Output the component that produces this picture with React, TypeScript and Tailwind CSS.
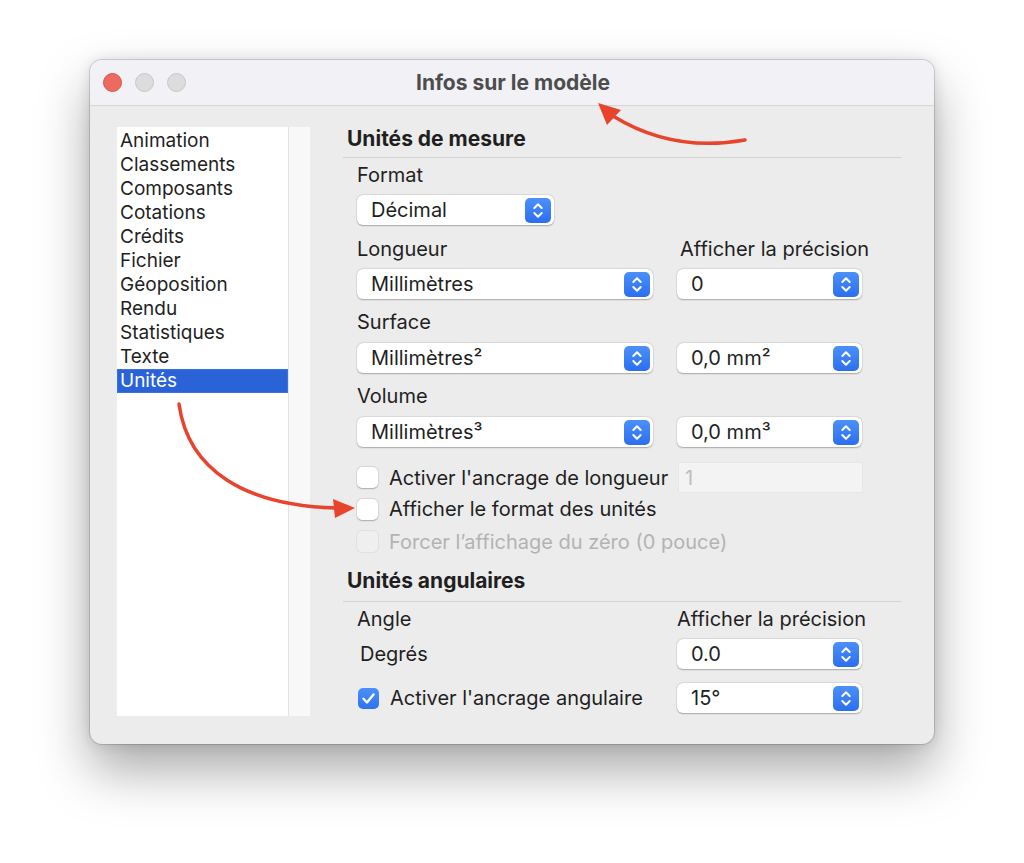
import React from 'react';

const font = { fontFamily: 'Inter, "Open Sans", sans-serif' };

const sections = [
  'Animation',
  'Classements',
  'Composants',
  'Cotations',
  'Crédits',
  'Fichier',
  'Géoposition',
  'Rendu',
  'Statistiques',
  'Texte',
  'Unités',
];

function Stepper() {
  return (
    <div className="w-[26px] h-[25px] rounded-[5px] bg-gradient-to-b from-[#4b90f9] to-[#2c6ef0] flex items-center justify-center shrink-0">
      <svg width="26" height="25" viewBox="0 0 26 25" fill="none">
        <path d="M9.3 10 L13 6.3 L16.7 10" stroke="white" strokeWidth="2" strokeLinecap="round" strokeLinejoin="round" />
        <path d="M9.3 15 L13 18.7 L16.7 15" stroke="white" strokeWidth="2" strokeLinecap="round" strokeLinejoin="round" />
      </svg>
    </div>
  );
}

function Select({ value, className = '' }: { value: string; className?: string }) {
  return (
    <div
      className={`h-[30px] bg-white rounded-[6px] flex items-center pl-[14px] pr-[3px] shadow-[0_0.5px_1.5px_rgba(0,0,0,0.28),0_0_0_0.5px_rgba(0,0,0,0.06)] ${className}`}
    >
      <span className="flex-1 text-[20px] text-[#1f1f1f] leading-none whitespace-nowrap">{value}</span>
      <Stepper />
    </div>
  );
}

function Checkbox({ checked, disabled }: { checked?: boolean; disabled?: boolean }) {
  if (checked) {
    return (
      <div className="w-[21px] h-[21px] rounded-[5px] bg-gradient-to-b from-[#4b90f9] to-[#2f72f0] flex items-center justify-center shrink-0">
        <svg width="21" height="21" viewBox="0 0 21 21" fill="none">
          <path d="M5.5 10.8 L9 14.5 L15.5 6.5" stroke="white" strokeWidth="2.4" strokeLinecap="round" strokeLinejoin="round" />
        </svg>
      </div>
    );
  }
  return (
    <div
      className={`w-[21px] h-[21px] rounded-[5px] shrink-0 ${
        disabled
          ? 'bg-[#efefef] shadow-[0_0_0_1px_rgba(0,0,0,0.05)]'
          : 'bg-white shadow-[0_0.5px_1.5px_rgba(0,0,0,0.25),0_0_0_0.5px_rgba(0,0,0,0.08)]'
      }`}
    />
  );
}

function Label({ children, className = '' }: { children: React.ReactNode; className?: string }) {
  return (
    <div className={`h-6 flex items-center text-[20px] text-[#1f1f1f] whitespace-nowrap ${className}`}>{children}</div>
  );
}

export default function App() {
  return (
    <div className="relative w-[1024px] h-[863px] bg-white pt-[60px] pl-[90px]" style={font}>
      <div className="w-[844px] h-[684px] rounded-[12px] bg-[#ececec] flex flex-col overflow-hidden shadow-[0_26px_52px_rgba(0,0,0,0.34),0_0_14px_rgba(0,0,0,0.12),0_0_0_1px_rgba(0,0,0,0.14)]">
        {/* title bar */}
        <div className="relative h-[46px] shrink-0 bg-[#f2f1f6] border-b border-[#d6d6d6] flex items-center">
          <div className="flex items-center gap-[13px] pl-[13px]">
            <div className="w-[19px] h-[19px] rounded-full bg-[#ed6a5e] border border-[#d8564a]" />
            <div className="w-[19px] h-[19px] rounded-full bg-[#dcdcdc] border border-[#c8c8c8]" />
            <div className="w-[19px] h-[19px] rounded-full bg-[#dcdcdc] border border-[#c8c8c8]" />
          </div>
          <div className="absolute inset-0 flex items-center justify-center pt-[1px] pl-[2px] text-[21px] font-bold text-[#4d4d4d]">
            Infos sur le modèle
          </div>
        </div>

        {/* body */}
        <div className="flex flex-1 pl-[27px] pt-[21px] pb-[28px] pr-[32px]">
          <div className="flex w-[193px] shrink-0">
            <div className="w-[171px] bg-white pt-[2px]">
              {sections.map((s) => (
                <div
                  key={s}
                  className={`h-6 flex items-center pl-[3px] text-[19px] ${
                    s === 'Unités' ? 'bg-[#2a63d8] text-white shadow-[inset_0_0_0_1px_#3a72e0]' : 'text-[#1f1f1f]'
                  }`}
                >
                  {s}
                </div>
              ))}
            </div>
            <div className="w-[22px] bg-[#f8f8f8] border-l border-[#e3e3e3]" />
          </div>

          <div className="flex-1 ml-[33px] flex flex-col">
            <div className="h-6 flex items-center pl-[4px] text-[21px] font-bold text-[#1f1f1f]">Unités de mesure</div>
            <div className="mt-[6px] border-t border-[#d3d3d3]" />

            <div className="pl-[14px] flex flex-col">
              <Label className="mt-[5px]">Format</Label>
              <Select value="Décimal" className="w-[197px] mt-[8px]" />

              <div className="grid grid-cols-[296px_185px] gap-x-[24px] mt-[12px]">
                <Label>Longueur</Label>
                <Label className="pl-[3px]">Afficher la précision</Label>
                <Select value="Millimètres" className="mt-[8px]" />
                <Select value="0" className="mt-[8px]" />
              </div>

              <Label className="mt-[11px]">Surface</Label>
              <div className="grid grid-cols-[296px_185px] gap-x-[24px] mt-[9px]">
                <Select value="Millimètres²" />
                <Select value="0,0 mm²" />
              </div>

              <Label className="mt-[11px]">Volume</Label>
              <div className="grid grid-cols-[296px_185px] gap-x-[24px] mt-[9px]">
                <Select value="Millimètres³" />
                <Select value="0,0 mm³" />
              </div>

              <div className="mt-[15px] h-[31px] flex items-center">
                <Checkbox />
                <span className="ml-[11px] text-[20px] text-[#1f1f1f] w-[289px] whitespace-nowrap">Activer l'ancrage de longueur</span>
                <div className="w-[185px] h-[31px] bg-[#f3f3f3] shadow-[inset_0_0_0_1px_rgba(0,0,0,0.05)] flex items-center pl-[7px] text-[20px] text-[#bdbdbd]">
                  1
                </div>
              </div>
              <div className="h-[32px] flex items-center">
                <Checkbox />
                <span className="ml-[11px] text-[20px] text-[#1f1f1f]">Afficher le format des unités</span>
              </div>
              <div className="h-[33px] flex items-center">
                <Checkbox disabled />
                <span className="ml-[11px] text-[20px] text-[#b3b3b3]">Forcer l’affichage du zéro (0 pouce)</span>
              </div>
            </div>

            <div className="mt-[11px] h-6 flex items-center pl-[4px] text-[21px] font-bold text-[#1f1f1f]">Unités angulaires</div>
            <div className="mt-[8px] border-t border-[#d3d3d3]" />

            <div className="pl-[14px] flex flex-col">
              <div className="grid grid-cols-[296px_185px] gap-x-[24px] mt-[5px]">
                <Label>Angle</Label>
                <Label>Afficher la précision</Label>
              </div>
              <div className="grid grid-cols-[296px_185px] gap-x-[24px] mt-[8px] items-center">
                <Label className="pl-[3px]">Degrés</Label>
                <Select value="0.0" />
              </div>
              <div className="grid grid-cols-[296px_185px] gap-x-[24px] mt-[14px] items-center">
                <div className="flex items-center pl-[1px]">
                  <Checkbox checked />
                  <span className="ml-[11px] text-[20px] text-[#1f1f1f] whitespace-nowrap">Activer l'ancrage angulaire</span>
                </div>
                <Select value="15°" />
              </div>
            </div>
          </div>
        </div>
      </div>

      {/* annotation arrows */}
      <svg className="absolute inset-0 pointer-events-none" width="1024" height="863" viewBox="0 0 1024 863" fill="none">
        <path d="M745 140 C 700 148, 655 142, 613 116" stroke="#e8432d" strokeWidth="3.5" strokeLinecap="round" />
        <polygon points="598,103 621,110 607,125" fill="#e8432d" />
        <path d="M179 404 C 188 470, 245 506, 337 508" stroke="#e8432d" strokeWidth="3.5" strokeLinecap="round" />
        <polygon points="355,508 333,499 335,518" fill="#e8432d" />
      </svg>
    </div>
  );
}
